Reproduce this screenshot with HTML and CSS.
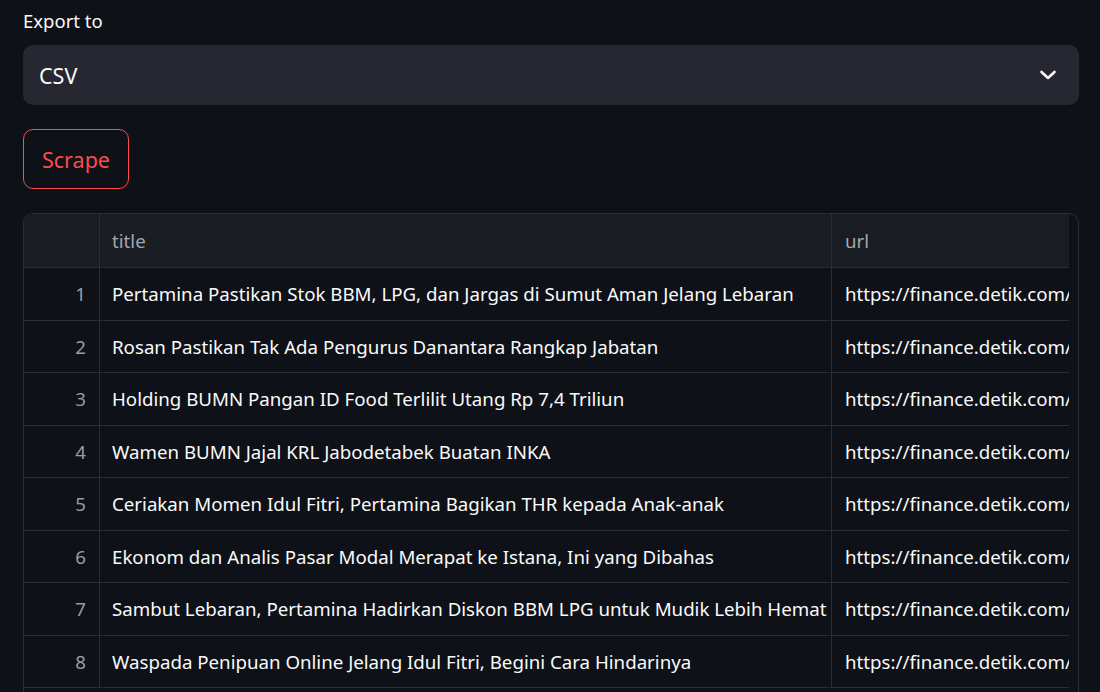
FILE: index.html
```html
<!DOCTYPE html>
<html>
<head>
<meta charset="utf-8">
<link rel="stylesheet" href="styles.css">
</head>
<body>
<div class="app">
  <label class="label">Export to</label>
  <div class="select">
    <span class="select-value">CSV</span>
    <svg class="chevron" width="18" height="12" viewBox="0 0 18 12"><path d="M2.5 3 L9 9 L15.5 3" fill="none" stroke="#fafafa" stroke-width="2.6" stroke-linecap="round" stroke-linejoin="round"/></svg>
  </div>
  <button class="btn">Scrape</button>
  <div class="table-wrap">
    <div class="table">
      <div class="row head">
        <div class="cell idx"></div>
        <div class="cell title">title</div>
        <div class="cell url">url</div>
      </div>
      <div class="row"><div class="cell idx">1</div><div class="cell title">Pertamina Pastikan Stok BBM, LPG, dan Jargas di Sumut Aman Jelang Lebaran</div><div class="cell url">https://finance.detik.com/</div></div>
      <div class="row"><div class="cell idx">2</div><div class="cell title">Rosan Pastikan Tak Ada Pengurus Danantara Rangkap Jabatan</div><div class="cell url">https://finance.detik.com/</div></div>
      <div class="row"><div class="cell idx">3</div><div class="cell title">Holding BUMN Pangan ID Food Terlilit Utang Rp 7,4 Triliun</div><div class="cell url">https://finance.detik.com/</div></div>
      <div class="row"><div class="cell idx">4</div><div class="cell title">Wamen BUMN Jajal KRL Jabodetabek Buatan INKA</div><div class="cell url">https://finance.detik.com/</div></div>
      <div class="row"><div class="cell idx">5</div><div class="cell title">Ceriakan Momen Idul Fitri, Pertamina Bagikan THR kepada Anak-anak</div><div class="cell url">https://finance.detik.com/</div></div>
      <div class="row"><div class="cell idx">6</div><div class="cell title">Ekonom dan Analis Pasar Modal Merapat ke Istana, Ini yang Dibahas</div><div class="cell url">https://finance.detik.com/</div></div>
      <div class="row"><div class="cell idx">7</div><div class="cell title">Sambut Lebaran, Pertamina Hadirkan Diskon BBM LPG untuk Mudik Lebih Hemat</div><div class="cell url">https://finance.detik.com/</div></div>
      <div class="row"><div class="cell idx">8</div><div class="cell title">Waspada Penipuan Online Jelang Idul Fitri, Begini Cara Hindarinya</div><div class="cell url">https://finance.detik.com/</div></div>
    </div>
  </div>
</div>
</body>
</html>
```
FILE: styles.css
```css
html, body {
  margin: 0;
  padding: 0;
  background: #0e1117;
  height: 692px;
  overflow: hidden;
}
body {
  font-family: "Noto Sans", "Open Sans", sans-serif;
  color: #fafafa;
}
.app {
  padding: 8px 21px 0 23px;
  display: flex;
  flex-direction: column;
  align-items: flex-start;
}
.label {
  font-size: 18.5px;
  line-height: 26px;
  height: 26px;
  margin-bottom: 11px;
}
.select {
  align-self: stretch;
  height: 60px;
  background: #262730;
  border-radius: 10px;
  display: flex;
  align-items: center;
  justify-content: space-between;
  padding: 0 22px 0 16px;
  font-size: 21.5px;
  margin-bottom: 24px;
}
.chevron { display: block; }
.btn {
  height: 60px;
  width: 106px;
  background: #0e1117;
  border: 1px solid #ff4b4b;
  border-radius: 10px;
  color: #ff4b4b;
  font-family: inherit;
  font-size: 21.5px;
  padding: 0;
  margin-bottom: 24px;
}
.table-wrap {
  align-self: stretch;
  border: 1px solid #2b2d35;
  border-bottom: none;
  border-radius: 10px 10px 0 0;
  overflow: hidden;
  height: 479px;
  padding-right: 9px;
}
.table {
  overflow: hidden;
  height: 100%;
}
.row {
  display: flex;
  height: 52.5px;
  border-bottom: 1px solid #2b2d35;
  box-sizing: border-box;
  white-space: nowrap;
}
.row.head {
  height: 54px;
  background: #1a1c24;
}
.cell {
  display: flex;
  align-items: center;
  font-size: 18.7px;
  flex: none;
  box-sizing: border-box;
  overflow: hidden;
}
.idx {
  width: 76px;
  justify-content: flex-end;
  padding-right: 13px;
  color: #9a9ca3;
  border-right: 1px solid #2b2d35;
}
.title {
  width: 732px;
  padding-left: 12px;
  border-right: 1px solid #2b2d35;
}
.url {
  width: 238px;
  padding-left: 13px;
}
.head .cell { color: #a3a6ad; }
```
